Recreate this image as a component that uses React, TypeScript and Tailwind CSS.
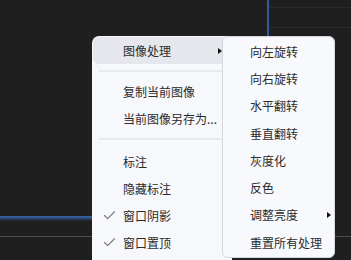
import { Check } from "lucide-react";

const mainGroups = [
  ["复制当前图像", "当前图像另存为..."],
  ["标注", "隐藏标注", "窗口阴影", "窗口置顶"],
];
const checked = ["窗口阴影", "窗口置顶"];

const subItems = [
  "向左旋转",
  "向右旋转",
  "水平翻转",
  "垂直翻转",
  "灰度化",
  "反色",
  "调整亮度",
  "重置所有处理",
];

function Arrow() {
  return (
    <svg width="4" height="6" viewBox="0 0 4 6" className="shrink-0">
      <path d="M0 0 L4 3 L0 6 Z" fill="#111" />
    </svg>
  );
}

function Separator({ tall }: { tall?: boolean }) {
  return (
    <div className={tall ? "h-[16px] pt-[6px] px-[7px]" : "h-[14px] pt-[6px] px-[7px]"}>
      <div className="h-[2px] w-full bg-[#e8e9ee]" />
    </div>
  );
}

export default function App() {
  return (
    <div
      className="relative w-[351px] h-[260px] overflow-hidden bg-[#1f1f1f] text-[12px] text-[#2b2b2b]"
      style={{ fontFamily: '"Noto Sans CJK SC", "Noto Sans", sans-serif' }}
    >
      {/* canvas behind the menu */}
      <div className="flex flex-col h-full">
        <div className="flex h-[40px]">
          <div className="w-[267px]" />
          <div className="w-[2px] bg-[#2f5d9c]" />
          <div className="flex-1 flex flex-col pt-[7px] gap-[19px]">
            <div className="h-px bg-[#2a2a2a]" />
            <div className="h-px bg-[#2a2a2a]" />
          </div>
        </div>
        <div className="h-[176px]" />
        <div className="w-[100px] h-[5px] bg-gradient-to-b from-[#3868ad] via-[#2a4770] to-[#1f1f1f]" />
        <div className="h-[15px]" />
        <div className="h-px bg-[#4d4d4d]" />
      </div>

      {/* context menu with its open submenu */}
      <div className="absolute left-[92px] top-[36px] flex items-start">
        <div className="w-[140px] h-[240px] bg-[#f7f8fc] rounded-tl-[7px] pt-px">
          <div className="h-[27px] mx-px flex items-center justify-between rounded-[6px] bg-[#e5e7ec] pl-[30px] pr-[9px]">
            <span>图像处理</span>
            <Arrow />
          </div>
          {mainGroups.map((group, gi) => (
            <div key={gi}>
              <Separator tall={gi === 1} />
              {group.map((item) => (
                <div key={item} className="h-[27px] flex items-center">
                  <span className="w-[31px] flex justify-center">
                    {checked.includes(item) && (
                      <Check size={15} strokeWidth={1.8} color="#7a7a7a" className="ml-[4px]" />
                    )}
                  </span>
                  <span>{item}</span>
                </div>
              ))}
            </div>
          ))}
        </div>

        <div className="-ml-[10px] w-[113px] h-[222px] bg-[#f8f9fd] rounded-[6px] border border-[#d4d6dc] pt-[1px]">
          {subItems.map((item) => (
            <div key={item} className="h-[27.3px] flex items-center justify-between pl-[27px] pr-[3px]">
              <span>{item}</span>
              {item === "调整亮度" && <Arrow />}
            </div>
          ))}
        </div>
      </div>
    </div>
  );
}
